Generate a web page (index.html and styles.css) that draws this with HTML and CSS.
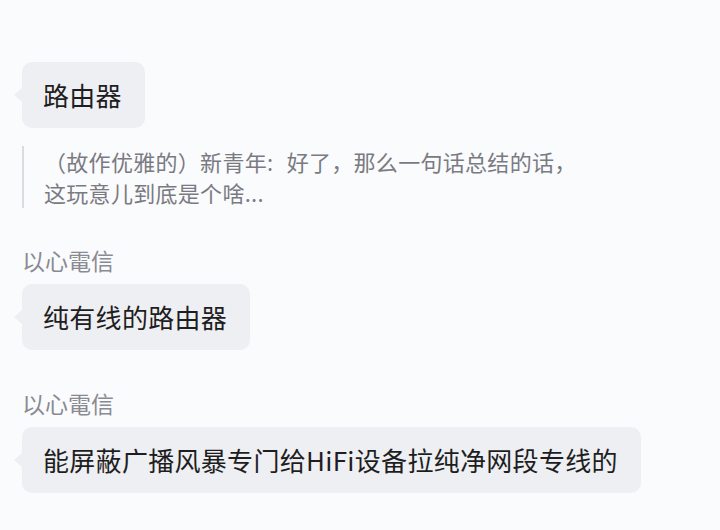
FILE: index.html
```html
<!DOCTYPE html>
<html lang="zh-CN">
<head>
<meta charset="utf-8">
<title>chat</title>
<link rel="stylesheet" href="styles.css">
</head>
<body>
<div class="chat">
  <div class="bubble">路由器</div>
  <blockquote class="quote">（故作优雅的）新青年: 好了，那么一句话总结的话，<br>这玩意儿到底是个啥...</blockquote>
  <div class="name">以心電信</div>
  <div class="bubble">纯有线的路由器</div>
  <div class="name">以心電信</div>
  <div class="bubble">能屏蔽广播风暴专门给HiFi设备拉纯净网段专线的</div>
</div>
</body>
</html>
```
FILE: styles.css
```css
html, body {
  margin: 0;
  padding: 0;
  background: #fafbfd;
}
body {
  width: 720px;
  height: 530px;
  overflow: hidden;
  font-family: "Noto Sans CJK SC", "Noto Sans", sans-serif;
}
.chat {
  display: flex;
  flex-direction: column;
  align-items: flex-start;
  padding: 62px 0 0 22px;
}
.bubble {
  position: relative;
  background: #eeeff2;
  color: #1e1e22;
  font-size: 26px;
  line-height: 37px;
  letter-spacing: 0.3px;
  padding: 14px 23px 15px 21px;
  border-radius: 10px;
}
.bubble::before {
  content: "";
  position: absolute;
  left: -8px;
  top: 50%;
  margin-top: -7px;
  border-right: 8px solid #eeeff2;
  border-top: 7px solid transparent;
  border-bottom: 7px solid transparent;
}
.quote {
  margin: 18px 0 0 0;
  padding: 0 0 0 20px;
  border-left: 2px solid #dcdce0;
  color: #7a7a82;
  font-size: 22px;
  line-height: 31px;
  letter-spacing: 0.3px;
  word-spacing: 8px;
}
.name {
  margin: 38px 0 9px 0;
  color: #8a8a92;
  font-size: 23px;
  line-height: 30px;
}
.quote + .name {
  margin-top: 37px;
}
```
